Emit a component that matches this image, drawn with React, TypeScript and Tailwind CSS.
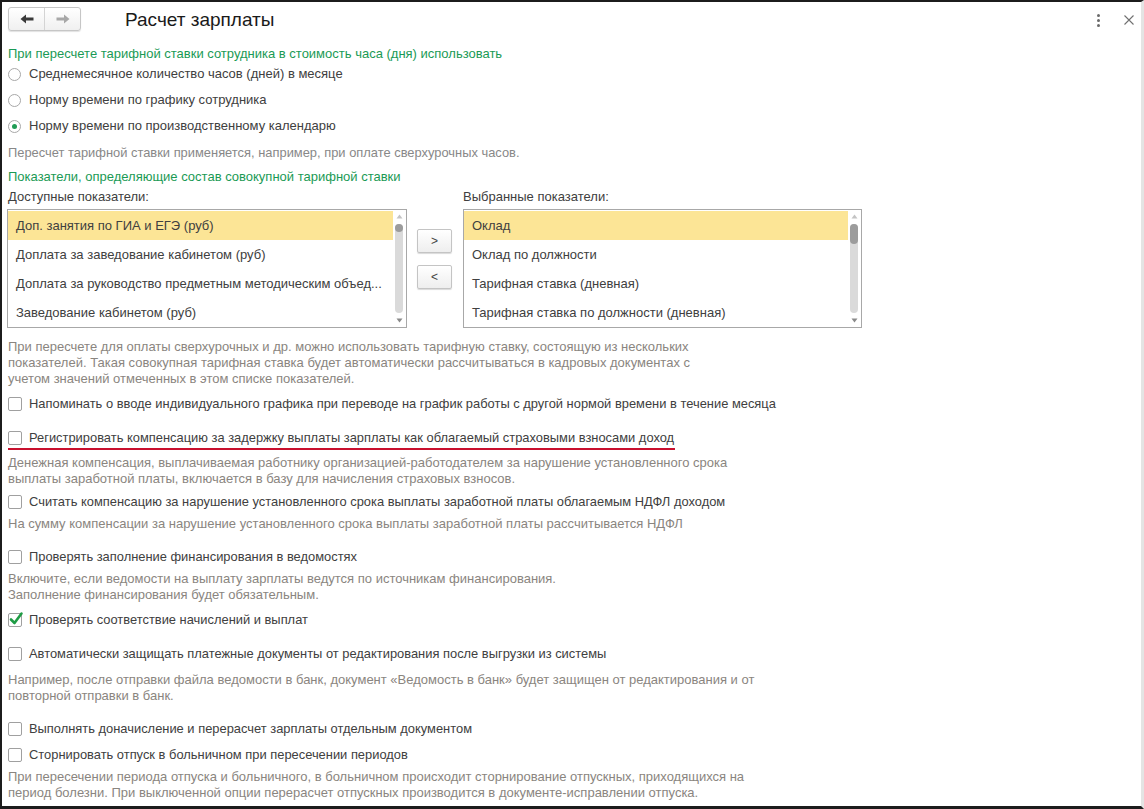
import React from 'react'

const FONT = { fontFamily: '"Liberation Sans", Arial, sans-serif' }

const available = [
  'Доп. занятия по ГИА и ЕГЭ (руб)',
  'Доплата за заведование кабинетом (руб)',
  'Доплата за руководство предметным методическим объед...',
  'Заведование кабинетом (руб)',
]

const selected = [
  'Оклад',
  'Оклад по должности',
  'Тарифная ставка (дневная)',
  'Тарифная ставка по должности (дневная)',
]

function Radio({ checked, label, className = '' }: { checked?: boolean; label: string; className?: string }) {
  return (
    <div className={`flex items-center h-5 gap-[8px] ${className}`}>
      <span className="w-[13px] h-[13px] rounded-full border border-[#a8a8a8] bg-white flex items-center justify-center shrink-0">
        {checked && <span className="w-[5px] h-[5px] rounded-full bg-[#1f9c55]" />}
      </span>
      <span className="text-[13px] text-[#404040] whitespace-nowrap">{label}</span>
    </div>
  )
}

function Check({ checked, label, className = '' }: { checked?: boolean; label: string; className?: string }) {
  return (
    <div className={`flex items-center h-5 gap-[7px] ${className}`}>
      <span className="relative w-[14px] h-[14px] rounded-[2px] border border-[#a0a0a0] bg-white shrink-0">
        {checked && (
          <svg className="absolute -left-[1px] -top-[3px]" width="16" height="16" viewBox="0 0 16 16">
            <path d="M3 8.5 L6.5 12 L13.5 2.5" fill="none" stroke="#1f9c45" strokeWidth="2.6" strokeLinecap="round" strokeLinejoin="round" />
          </svg>
        )}
      </span>
      <span className="text-[12.9px] text-[#404040] whitespace-nowrap">{label}</span>
    </div>
  )
}

function Note({ lines, className = '' }: { lines: string[]; className?: string }) {
  return (
    <div className={`text-[13px] leading-[16px] text-[#8a8580] ${className}`}>
      {lines.map((l, i) => (
        <div key={i} className="whitespace-nowrap">{l}</div>
      ))}
    </div>
  )
}

function ListBox({ items, thumb }: { items: string[]; thumb: string }) {
  return (
    <div className="flex border border-[#a8a8a8] bg-white h-[119px]">
      <div className="flex-1 min-w-0 pt-[1px]">
        {items.map((it, i) => (
          <div
            key={i}
            className={`h-[29px] flex items-center pl-[8px] pr-2 text-[13px] text-[#404040] whitespace-nowrap overflow-hidden ${i === 0 ? 'bg-[#fce596]' : ''}`}
          >
            {it}
          </div>
        ))}
      </div>
      <div className="w-[12px] flex flex-col items-center py-[4px] mr-[1px]">
        <svg width="7" height="5" viewBox="0 0 7 5"><path d="M3.5 0.5 L6.5 4.5 L0.5 4.5 Z" fill="#c4c4c4" /></svg>
        <div className="flex-1 w-[8px] my-[5px] rounded-full bg-[#dadada] relative">
          <div className={`absolute left-0 top-0 w-[8px] rounded-full bg-[#9c9c9c] ${thumb}`} />
        </div>
        <svg width="7" height="5" viewBox="0 0 7 5"><path d="M0.5 0.5 L6.5 0.5 L3.5 4.5 Z" fill="#8a8a8a" /></svg>
      </div>
    </div>
  )
}

function MoveButton({ children, className = '' }: { children: React.ReactNode; className?: string }) {
  return (
    <div
      className={`w-[35px] h-[24px] rounded-[2px] border border-[#c4c4c4] bg-gradient-to-b from-white to-[#eeeeee] shadow-[0_1px_1px_rgba(0,0,0,0.15)] flex items-center justify-center text-[12px] text-[#444] ${className}`}
    >
      {children}
    </div>
  )
}

export default function App() {
  return (
    <div
      style={FONT}
      className="w-[1144px] h-[809px] overflow-hidden bg-white border-t-2 border-l-2 border-b-[3px] border-[#1c1c1c] border-r-[3px] border-r-[#e4e4e4] box-border"
    >
      {/* header */}
      <div className="h-[42px] flex items-start pt-[5px] pl-[6px] pr-[5px]">
        <div className="flex h-[24px] w-[73px] rounded-[3px] border border-[#c6c6c6] bg-gradient-to-b from-white to-[#f0f0f0] shadow-[0_1px_1px_rgba(0,0,0,0.12)]">
          <div className="flex-1 flex items-center justify-center border-r border-[#d4d4d4]">
            <svg width="14" height="10" viewBox="0 0 14 10">
              <path d="M0.5 5 L6 0.5 L6 3.5 L13.5 3.5 L13.5 6.5 L6 6.5 L6 9.5 Z" fill="#3a3a3a" />
            </svg>
          </div>
          <div className="flex-1 flex items-center justify-center">
            <svg width="14" height="10" viewBox="0 0 14 10">
              <path d="M13.5 5 L8 0.5 L8 3.5 L0.5 3.5 L0.5 6.5 L8 6.5 L8 9.5 Z" fill="#a8a8a8" />
            </svg>
          </div>
        </div>
        <div className="ml-[44px] mt-[1px] text-[19px] leading-[24px] text-[#1a1a1a]">Расчет зарплаты</div>
        <div className="ml-auto flex items-center h-[24px] mt-[1px]">
          <div className="flex flex-col gap-[2px] mr-[24px]">
            <span className="w-[3px] h-[3px] rounded-full bg-[#6a6a6a]" />
            <span className="w-[3px] h-[3px] rounded-full bg-[#6a6a6a]" />
            <span className="w-[3px] h-[3px] rounded-full bg-[#6a6a6a]" />
          </div>
          <svg width="10" height="10" viewBox="0 0 10 10" className="mr-[2px]">
            <path d="M0.5 0.5 L9.5 9.5 M9.5 0.5 L0.5 9.5" stroke="#707070" strokeWidth="1.1" />
          </svg>
        </div>
      </div>

      <div className="pl-[6px]">
        <div className="h-5 flex items-center text-[13px] text-[#1a9a55] whitespace-nowrap">
          При пересчете тарифной ставки сотрудника в стоимость часа (дня) использовать
        </div>
        <Radio label="Среднемесячное количество часов (дней) в месяце" />
        <Radio className="mt-[6px]" label="Норму времени по графику сотрудника" />
        <Radio className="mt-[6px]" checked label="Норму времени по производственному календарю" />
        <div className="mt-[7px] h-5 flex items-center text-[12.9px] text-[#888888] whitespace-nowrap">
          Пересчет тарифной ставки применяется, например, при оплате сверхурочных часов.
        </div>
        <div className="mt-[4px] h-5 flex items-center text-[13px] text-[#1a9a55] whitespace-nowrap">
          Показатели, определяющие состав совокупной тарифной ставки
        </div>

        <div className="flex items-start">
          <div className="w-[400px] -ml-[1px]">
            <div className="h-5 flex items-center text-[13px] text-[#404040] pl-[1px]">Доступные показатели:</div>
            <div className="mt-[2px]">
              <ListBox items={available} thumb="h-[8px]" />
            </div>
          </div>
          <div className="ml-[10px] mt-[42px] flex flex-col gap-[12px]">
            <MoveButton>&gt;</MoveButton>
            <MoveButton>&lt;</MoveButton>
          </div>
          <div className="w-[399px] ml-[11px]">
            <div className="h-5 flex items-center text-[13px] text-[#404040]">Выбранные показатели:</div>
            <div className="mt-[2px]">
              <ListBox items={selected} thumb="h-[20px]" />
            </div>
          </div>
        </div>

        <Note
          className="mt-[11px] text-[12.75px]"
          lines={[
            'При пересчете для оплаты сверхурочных и др. можно использовать тарифную ставку, состоящую из нескольких',
            'показателей. Такая совокупная тарифная ставка будет автоматически рассчитываться в кадровых документах с',
            'учетом значений отмеченных в этом списке показателей.',
          ]}
        />
        <Check
          className="mt-[7px]"
          label="Напоминать о вводе индивидуального графика при переводе на график работы с другой нормой времени в течение месяца"
        />
        <div className="mt-[14px] inline-flex border-b-2 border-[#c8102e] pr-[1px]">
          <Check label="Регистрировать компенсацию за задержку выплаты зарплаты как облагаемый страховыми взносами доход" />
        </div>
        <Note
          className="mt-[3px]"
          lines={[
            'Денежная компенсация, выплачиваемая работнику организацией-работодателем за нарушение установленного срока',
            'выплаты заработной платы, включается в базу для начисления страховых взносов.',
          ]}
        />
        <Check
          className="mt-[5px]"
          label="Считать компенсацию за нарушение установленного срока выплаты заработной платы облагаемым НДФЛ доходом"
        />
        <Note
          className="mt-[4px]"
          lines={['На сумму компенсации за нарушение установленного срока выплаты заработной платы рассчитывается НДФЛ']}
        />
        <Check className="mt-[15px]" label="Проверять заполнение финансирования в ведомостях" />
        <Note
          className="mt-[4px]"
          lines={[
            'Включите, если ведомости на выплату зарплаты ведутся по источникам финансирования.',
            'Заполнение финансирования будет обязательным.',
          ]}
        />
        <Check className="mt-[7px]" checked label="Проверять соответствие начислений и выплат" />
        <Check
          className="mt-[14px]"
          label="Автоматически защищать платежные документы от редактирования после выгрузки из системы"
        />
        <Note
          className="mt-[8px]"
          lines={[
            'Например, после отправки файла ведомости в банк, документ «Ведомость в банк» будет защищен от редактирования и от',
            'повторной отправки в банк.',
          ]}
        />
        <Check className="mt-[15px]" label="Выполнять доначисление и перерасчет зарплаты отдельным документом" />
        <Check className="mt-[6px]" label="Сторнировать отпуск в больничном при пересечении периодов" />
        <Note
          className="mt-[4px]"
          lines={[
            'При пересечении периода отпуска и больничного, в больничном происходит сторнирование отпускных, приходящихся на',
            'период болезни. При выключенной опции перерасчет отпускных производится в документе-исправлении отпуска.',
          ]}
        />
      </div>
    </div>
  )
}
